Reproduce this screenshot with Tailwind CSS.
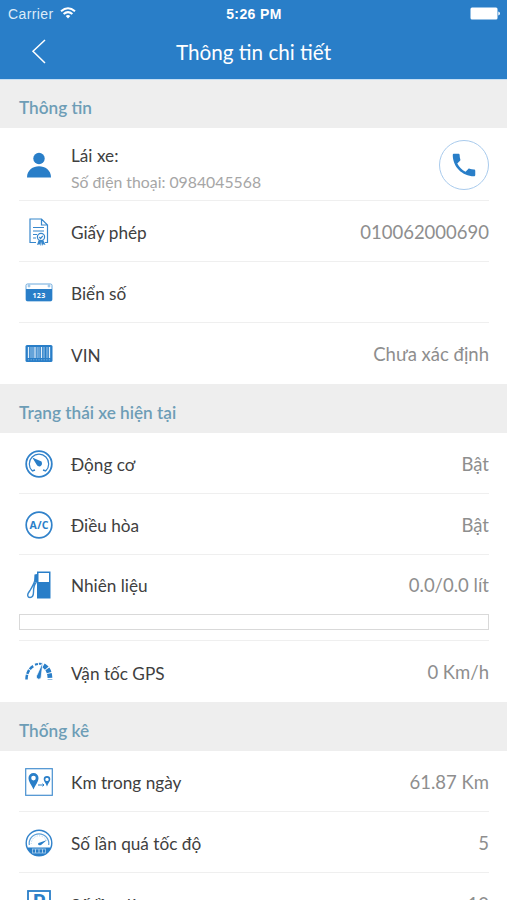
<!DOCTYPE html>
<html lang="vi">
<head>
<meta charset="utf-8">
<title>Thông tin chi tiết</title>
<script src="https://cdn.jsdelivr.net/npm/@tailwindcss/browser@4"></script>
</head>
<body class="w-[507px] h-[900px] overflow-hidden bg-white font-['Lato','Noto_Sans',sans-serif] text-[17.2px] text-[#404040]">
<header class="h-[79px] bg-[#297ec8] text-white">
  <div class="grid h-[26px] grid-cols-3 items-center pt-[2px] pl-[8px] pr-[7px] font-['Liberation_Sans',sans-serif]">
    <div class="flex items-center gap-[6px] text-[14px] leading-[24px] tracking-[0.4px] text-[#dcebf8]">Carrier
      <svg class="w-[16px] h-[12px] -mt-[2px]" viewBox="0 0 16 12" fill="none" stroke="#fff" stroke-width="2"><path d="M1 4.3Q8-1.7 15 4.3"/><path d="M3.6 7Q8 3.2 12.4 7"/><path d="M5.7 8.9Q8 7 10.3 8.9L8 11.5Z" fill="#fff" stroke="none"/></svg>
    </div>
    <div class="text-center text-[14px] font-bold leading-[24px] tracking-[0.4px]">5:26 PM</div>
    <svg class="ml-auto w-[30px] h-[13px] -mt-[1px]" viewBox="0 0 30 13" fill="#fff"><rect x="0.5" y="0.5" width="27" height="12" rx="1.5"/><path d="M28.3 4.5Q30 5 30 6.5T28.3 8.5Z"/></svg>
  </div>
  <div class="grid h-[53px] grid-cols-[80px_1fr_80px] items-center">
    <svg class="ml-[31px] w-[16px] h-[26px] -mt-[4px]" viewBox="0 0 16 26" fill="none" stroke="#fff" stroke-width="1.5"><path d="M14 2L2 13.3L14 25"/></svg>
    <h1 class="-mt-[2px] text-center text-[20.7px] leading-[26px]">Thông tin chi tiết</h1>
  </div>
</header>
<main>
  <h2 class="flex h-[49px] items-center border-t border-[#c5dff4] bg-[#eeeeee] pl-[19px] pt-[7px] text-[17.2px] font-semibold text-[#6d9db6]">Thông tin</h2>
  <section class="pl-[19px] pr-[18px]">
    <div class="flex h-[73px] items-center border-b border-[#efefef] pt-[1px]">
      <svg class="w-[40px] h-[30px] shrink-0" viewBox="0 0 40 30" fill="#297ec8"><circle cx="20" cy="8.5" r="5.7"/><path d="M8 27.5C8 12.5 32 12.5 32 27.5Z"/></svg>
      <div class="ml-[12px] flex-1 pt-[9px]"><div class="leading-[26px]">Lái xe:</div><div class="text-[15.8px] leading-[26px] text-[#a6a6a6]">Số điện thoại: 0984045568</div></div>
      <button class="flex size-[50px] items-center justify-center rounded-full border border-[#a9cbed]">
        <svg class="size-[30px]" viewBox="0 0 24 24" fill="#297ec8"><path d="M6.62 10.79c1.44 2.83 3.76 5.14 6.59 6.59l2.2-2.2c.27-.27.67-.36 1.02-.24 1.12.37 2.33.57 3.57.57.55 0 1 .45 1 1V20c0 .55-.45 1-1 1-9.39 0-17-7.61-17-17 0-.55.45-1 1-1h3.5c.55 0 1 .45 1 1 0 1.25.2 2.45.57 3.57.11.35.03.74-.25 1.02l-2.2 2.2z"/></svg>
      </button>
    </div>
    <div class="flex h-[61px] items-center border-b border-[#efefef] pt-[1px]">
      <svg class="w-[40px] h-[30px] shrink-0" viewBox="0 0 40 30" fill="none" stroke="#3787cc" stroke-width="1.2"><path d="M17 25.5H11V2H22.5L28.5 8V25.5H26M22.500 2V8H28.500M14 10.500H25M14 14H25M14 17.500H18M14 21H17"/><circle cx="22" cy="20" r="3.6"/><path d="M20.300 20L21.600 21.500L23.800 18.800"/><path d="M19.500 23.500L18 28L20.500 27.200L21.500 29L22 24.500L23 29L24 27.200L26.500 28L24.500 23.500Z" fill="#3787cc" stroke="none"/></svg>
      <div class="ml-[12px] flex-1 pt-[3px]">Giấy phép</div><div class="pt-[3px] text-[18.5px] text-[#8e8e8e]">010062000690</div>
    </div>
    <div class="flex h-[61px] items-center border-b border-[#efefef] pt-[1px]">
      <svg class="w-[40px] h-[30px] shrink-0" viewBox="0 0 40 30"><rect x="7" y="6" width="26" height="17" rx="1.5" fill="#fff" stroke="#6ba8dc"/><path d="M7 11H33V22Q33 23 32 23H8Q7 23 7 22Z" fill="#297ec8"/><g fill="#fff" stroke="#6ba8dc" stroke-width=".8"><circle cx="10" cy="8" r="1"/><circle cx="30" cy="8" r="1"/></g><text x="20" y="19.5" text-anchor="middle" font-family="Open Sans" font-weight="700" font-size="7" letter-spacing=".3" fill="#fff">123</text></svg>
      <div class="ml-[12px] flex-1 pt-[3px]">Biển số</div>
    </div>
    <div class="flex h-[61px] items-center pt-[1px]">
      <svg class="w-[40px] h-[30px] shrink-0" viewBox="0 0 40 30"><rect x="6.5" y="6" width="27" height="17" rx="1.5" fill="#297ec8"/><path d="M9.500 8V19M16 8V19M22.500 8V19M30.500 8V19" stroke="#e2effa" stroke-width="1.3"/><path d="M12 8V19M14 8V19M18.200 8V19M20 8V19M25 8V19M28 8V19" stroke="#8dbce4" stroke-width="1.2"/><path d="M9 20.800H31" stroke="#7bb1df" stroke-dasharray="1.2 1.4"/></svg>
      <div class="ml-[12px] flex-1 pt-[3px]">VIN</div><div class="pt-[2px] text-[18.5px] text-[#8e8e8e]">Chưa xác định</div>
    </div>
  </section>
  <h2 class="flex h-[49px] items-center bg-[#eeeeee] pl-[19px] pt-[8px] text-[17.2px] font-semibold text-[#6d9db6]">Trạng thái xe hiện tại</h2>
  <section class="pl-[19px] pr-[18px]">
    <div class="flex h-[61px] items-center border-b border-[#efefef] pt-[2px]">
      <svg class="w-[40px] h-[30px] shrink-0" viewBox="0 0 40 30" fill="none" stroke="#3182ca"><circle cx="20" cy="15" r="12.8" stroke-width="1.8"/><path d="M13.200 21.800A9.700 9.700 0 1 1 26.800 21.800" stroke-width="1.2"/><path d="M13 22L16 21M27 22L24 21" stroke-width="1.5"/><path d="M13.300 8.600L22.500 12.600Q24 16 21 17.600Q18.500 17.800 17.500 15.500Z" fill="#297ec8" stroke="none"/></svg>
      <div class="ml-[12px] flex-1 pt-[2px]">Động cơ</div><div class="pt-[2px] text-[18.5px] text-[#8e8e8e]">Bật</div>
    </div>
    <div class="flex h-[61px] items-center border-b border-[#efefef] pt-[2px]">
      <svg class="w-[40px] h-[30px] shrink-0" viewBox="0 0 40 30"><circle cx="20" cy="15" r="12.8" fill="none" stroke="#3182ca" stroke-width="1.7"/><text x="20.2" y="18.8" text-anchor="middle" font-family="Open Sans" font-weight="700" font-size="10.5" letter-spacing=".3" fill="#297ec8">A/C</text></svg>
      <div class="ml-[12px] flex-1 pt-[2px]">Điều hòa</div><div class="pt-[2px] text-[18.5px] text-[#8e8e8e]">Bật</div>
    </div>
    <div class="h-[86px] border-b border-[#efefef]">
      <div class="flex h-[59px] items-center">
        <svg class="w-[40px] h-[30px] shrink-0" viewBox="0 0 40 30"><path d="M18 1.500H31.500V28.500H18Z" fill="#297ec8"/><path d="M19.500 3H30V12H19.500Z" fill="#fff"/><path d="M15.500 4.500L18 4V12H15Z" fill="#297ec8"/><path d="M16 10Q15 14 11 20.500C7 25.500 9 27.500 11 27.500Q14.500 27.500 14.500 22Q14.500 15 17.500 12" fill="none" stroke="#3787cc" stroke-width="1.4"/></svg>
        <div class="ml-[12px] flex-1 pt-[3px]">Nhiên liệu</div><div class="pt-[3px] text-[18.5px] text-[#8e8e8e]">0.0/0.0 lít</div>
      </div>
      <div class="h-[16px] border border-[#d9d9d9]"></div>
    </div>
    <div class="flex h-[61px] items-center pt-[1px]">
      <svg class="w-[40px] h-[30px] shrink-0" viewBox="0 0 40 30" fill="none" stroke="#297ec8"><path d="M7.500 22.500Q7.500 13 15 8.700" stroke-width="2.5" stroke-dasharray="4.5 1"/><path d="M16 7.700Q20 6.200 23.500 7" stroke-width="2" stroke-dasharray="3 1"/><path d="M24.500 8.500Q31 12 31 22.500" stroke-width="4.8" stroke-dasharray="4.2 1"/><path d="M24 4.500L22 21Q19.800 23.500 17.600 21Q16.800 19 18.500 17Z" fill="#297ec8" stroke="#fff" stroke-width=".7"/></svg>
      <div class="ml-[12px] flex-1 pt-[3px]">Vận tốc GPS</div><div class="pt-[2px] text-[18.5px] text-[#8e8e8e]">0 Km/h</div>
    </div>
  </section>
  <h2 class="flex h-[49px] items-center bg-[#eeeeee] pl-[19px] pt-[8px] text-[17.2px] font-semibold text-[#6d9db6]">Thống kê</h2>
  <section class="pl-[19px] pr-[18px]">
    <div class="flex h-[61px] items-center border-b border-[#efefef] pt-[1px]">
      <svg class="w-[40px] h-[30px] shrink-0" viewBox="0 0 40 30"><rect x="6.7" y="1.7" width="26.6" height="26.6" fill="none" stroke="#4790d0" stroke-width="1.2"/><path fill-rule="evenodd" fill="#297ec8" d="M14.500 6a5 5 0 0 1 5 5c0 3.500-3 7-5 11.500c-2-4.500-5-8-5-11.500a5 5 0 0 1 5-5Zm0 2.800a2.300 2.300 0 1 0 0 4.600a2.300 2.300 0 0 0 0-4.600Z"/><path fill-rule="evenodd" fill="#297ec8" d="M28 9a3.300 3.300 0 0 1 3.300 3.300c0 2-2 3.500-3.300 7.200c-1.300-3.700-3.300-5.200-3.300-7.200a3.300 3.300 0 0 1 3.300-3.300Zm0 1.700a1.700 1.700 0 1 0 0 3.400a1.700 1.700 0 0 0 0-3.400Z"/><path d="M19 18H25M23.500 16.700L25 18L23.500 19.300" fill="none" stroke="#297ec8"/></svg>
      <div class="ml-[12px] flex-1 pt-[3px]">Km trong ngày</div><div class="pt-[3px] text-[18.5px] text-[#8e8e8e]">61.87 Km</div>
    </div>
    <div class="flex h-[61px] items-center border-b border-[#efefef] pt-[2px]">
      <svg class="w-[40px] h-[30px] shrink-0" viewBox="0 0 40 30"><circle cx="20" cy="15" r="12.8" fill="none" stroke="#3182ca" stroke-width="1.4"/><path d="M8 19.500H32Q29 28 20 28Q11 28 8 19.500Z" fill="#297ec8"/><path d="M10.300 17A9.800 9.800 0 1 1 29.700 17" fill="none" stroke="#5c9fd8" stroke-width="1.2"/><path d="M12.300 16A7.800 7.800 0 0 1 27 12" fill="none" stroke="#a9cdec" stroke-dasharray="1 1.5"/><path d="M28 12L22 17Q19.500 18 19 16Q19 14.500 21 14.500Z" fill="#297ec8"/><rect x="13.5" y="21" width="13" height="4" fill="none" stroke="#a9cdec" stroke-width=".8"/><path d="M16.500 21V25M20 21V25M23.500 21V25" stroke="#a9cdec"/></svg>
      <div class="ml-[12px] flex-1 pt-[2px]">Số lần quá tốc độ</div><div class="pt-[2px] text-[18.5px] text-[#8e8e8e]">5</div>
    </div>
    <div class="flex h-[61px] items-center pt-[1px]">
      <svg class="w-[40px] h-[30px] shrink-0" viewBox="0 0 40 30"><rect x="9" y="2" width="22" height="26" fill="none" stroke="#297ec8" stroke-width="1.8"/><text x="20" y="19.5" text-anchor="middle" font-family="Lato" font-weight="900" font-size="20" fill="#297ec8">P</text></svg>
      <div class="ml-[12px] flex-1 pt-[3px]">Số lần dừng</div><div class="pt-[2px] text-[18.5px] text-[#8e8e8e]">10</div>
    </div>
  </section>
</main>
</body>
</html>
